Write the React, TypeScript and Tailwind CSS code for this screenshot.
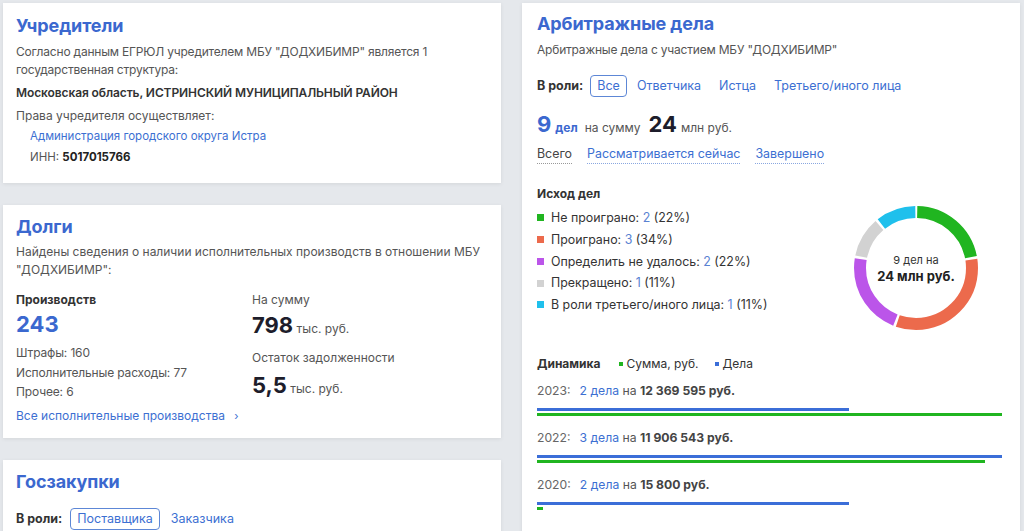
import React from 'react'

const blue = 'text-[#3c6fd2]'

function Card({ children, className = '' }: { children: React.ReactNode; className?: string }) {
  return (
    <div className={`bg-white shadow-[0_1px_4px_rgba(0,0,0,0.08)] ${className}`}>{children}</div>
  )
}

function Title({ children }: { children: React.ReactNode }) {
  return <div className="text-[18px] leading-[24px] font-bold text-[#3b68cf] tracking-[-0.1px]">{children}</div>
}

const outcomes = [
  { label: 'Не проиграно', n: 2, pct: 22, color: '#20b520' },
  { label: 'Проиграно', n: 3, pct: 34, color: '#ec6a4c' },
  { label: 'Определить не удалось', n: 2, pct: 22, color: '#bb55e9' },
  { label: 'Прекращено', n: 1, pct: 11, color: '#d2d2d2' },
  { label: 'В роли третьего/иного лица', n: 1, pct: 11, color: '#1fc0ec' },
]

const years = [
  { year: '2023', cases: '2 дела', sum: '12 369 595 руб.', casesW: 67.2, sumW: 100 },
  { year: '2022', cases: '3 дела', sum: '11 906 543 руб.', casesW: 100, sumW: 96.3 },
  { year: '2020', cases: '2 дела', sum: '15 800 руб.', casesW: 67.2, sumW: 1.3 },
]

function Donut() {
  const r = 56
  const c = 2 * Math.PI * r
  const gap = 2.5
  let offset = 0
  const total = 9
  const counts = [2, 3, 2, 1, 1]
  return (
    <div className="relative w-[124px] h-[124px]">
      <svg width="124" height="124" viewBox="0 0 124 124" className="-rotate-90">
        {outcomes.map((o, i) => {
          const len = (counts[i] / total) * c
          const el = (
            <circle
              key={o.label}
              cx="62"
              cy="62"
              r={r}
              fill="none"
              stroke={o.color}
              strokeWidth="12"
              strokeDasharray={`${len - gap} ${c - len + gap}`}
              strokeDashoffset={-(offset + gap / 2)}
            />
          )
          offset += len
          return el
        })}
      </svg>
      <div className="absolute inset-0 flex flex-col items-center justify-center pt-[1px]">
        <span className="text-[11px] leading-[14px] text-[#333]">9 дел на</span>
        <span className="text-[13px] leading-[18px] font-bold text-[#222]">24 млн руб.</span>
      </div>
    </div>
  )
}

export default function App() {
  return (
    <div
      className="w-[1024px] h-[531px] overflow-hidden bg-[#e5e8ec] flex items-start pl-[3px] pt-[3px] text-[12px] text-[#555]"
      style={{ fontFamily: 'Inter, "Noto Sans", sans-serif' }}
    >
      <div className="w-[498px] flex flex-col gap-[22px]">
        <Card className="h-[180px] pl-[13px] pr-[13px] pt-[11px]">
          <Title>Учредители</Title>
          <div className="mt-[5px] leading-[18px] tracking-[-0.2px]">
            Согласно данным ЕГРЮЛ учредителем МБУ "ДОДХИБИМР" является 1
            <br />
            государственная структура:
          </div>
          <div className="mt-[5px] leading-[18px] text-[#333] font-semibold tracking-[-0.1px]">
            Московская область, ИСТРИНСКИЙ МУНИЦИПАЛЬНЫЙ РАЙОН
          </div>
          <div className="mt-[5px] leading-[18px]">Права учредителя осуществляет:</div>
          <div className="pl-[14px] text-[11.5px]">
            <div className={`mt-[2px] leading-[18px] ${blue}`}>Администрация городского округа Истра</div>
            <div className="mt-[3px] leading-[18px]">
              ИНН: <span className="font-bold text-[#222]">5017015766</span>
            </div>
          </div>
        </Card>

        <Card className="h-[233px] pl-[13px] pr-[13px] pt-[10px]">
          <Title>Долги</Title>
          <div className="mt-[4px] leading-[18px]">
            Найдены сведения о наличии исполнительных производств в отношении МБУ
            <br />
            "ДОДХИБИМР":
          </div>
          <div className="mt-[12px] grid grid-cols-[236px_1fr]">
            <div>
              <div className="leading-[18px] font-bold text-[#333]">Производств</div>
              <div className="mt-[2px] text-[22px] leading-[26px] font-bold text-[#3b68cf]">243</div>
              <div className="mt-[6px] leading-[19.5px] tracking-[-0.15px]">Штрафы: 160</div>
              <div className="leading-[19.5px] tracking-[-0.15px]">Исполнительные расходы: 77</div>
              <div className="leading-[19.5px] tracking-[-0.15px]">Прочее: 6</div>
              <div className={`mt-[5px] leading-[18px] whitespace-nowrap ${blue}`}>
                Все исполнительные производства <span className="ml-[6px] text-[11px]">›</span>
              </div>
            </div>
            <div>
              <div className="leading-[18px]">На сумму</div>
              <div className="mt-[3px] leading-[26px]">
                <span className="text-[22px] font-bold text-[#1d1d2b]">798</span>{' '}
                <span className="text-[12px]">тыс. руб.</span>
              </div>
              <div className="mt-[7px] leading-[18px]">Остаток задолженности</div>
              <div className="mt-[5px] leading-[26px]">
                <span className="text-[22px] font-bold text-[#1d1d2b]">5,5</span>{' '}
                <span className="text-[12px]">тыс. руб.</span>
              </div>
            </div>
          </div>
        </Card>

        <Card className="h-[100px] pl-[13px] pr-[13px] pt-[10px]">
          <Title>Госзакупки</Title>
          <div className="mt-[14px] flex items-center">
            <span className="font-bold text-[#333] text-[12.5px]">В роли:</span>
            <span className={`ml-[8px] h-[22px] px-[6px] flex items-center border border-[#5d87d6] rounded-[4px] text-[12.5px] ${blue}`}>
              Поставщика
            </span>
            <span className={`ml-[11px] text-[12.5px] ${blue}`}>Заказчика</span>
          </div>
        </Card>
      </div>

      <Card className="ml-[21px] w-[498px] h-[600px] pl-[15px] pr-[18px] pt-[9px]">
        <Title>Арбитражные дела</Title>
        <div className="mt-[5px] leading-[18px] tracking-[-0.2px]">Арбитражные дела с участием МБУ "ДОДХИБИМР"</div>
        <div className="mt-[16px] flex items-center h-[22px] text-[12.5px]">
          <span className="font-bold text-[#333]">В роли:</span>
          <span className={`ml-[7px] h-[22px] px-[6px] flex items-center border border-[#5d87d6] rounded-[4px] ${blue}`}>
            Все
          </span>
          <span className={`ml-[10px] ${blue}`}>Ответчика</span>
          <span className={`ml-[18px] ${blue}`}>Истца</span>
          <span className={`ml-[18px] ${blue}`}>Третьего/иного лица</span>
        </div>
        <div className="mt-[14px] flex items-baseline leading-[26px]">
          <span className="text-[22px] font-bold text-[#3b68cf]">9</span>
          <span className="ml-[4px] font-bold text-[#3b68cf]">дел</span>
          <span className="ml-[7px]">на сумму</span>
          <span className="ml-[8px] text-[22px] font-bold text-[#1d1d2b]">24</span>
          <span className="ml-[4px]">млн руб.</span>
        </div>
        <div className="mt-[4px] flex leading-[18px] text-[12.4px]">
          <span className="text-[#444] border-b border-dotted border-[#999]">Всего</span>
          <span className={`ml-[15px] border-b border-dotted border-[#8aa7e0] ${blue}`}>Рассматривается сейчас</span>
          <span className={`ml-[15px] border-b border-dotted border-[#8aa7e0] ${blue}`}>Завершено</span>
        </div>

        <div className="mt-[21px] leading-[18px] font-bold text-[#333] text-[12px]">Исход дел</div>
        <div className="flex">
          <div className="flex-1 pt-[4px] text-[12.4px]">
            {outcomes.map((o) => (
              <div key={o.label} className="flex items-center leading-[21.75px] text-[#333]">
                <span className="w-[7px] h-[7px] mr-[7px]" style={{ backgroundColor: o.color }} />
                {o.label}:&nbsp;<span className="text-[#5a82d2]">{o.n}</span>&nbsp;({o.pct}%)
              </div>
            ))}
          </div>
          <div className="mr-[24px] mt-[3px]">
            <Donut />
          </div>
        </div>

        <div className="mt-[25px] flex items-center leading-[18px] text-[#333]">
          <span className="font-bold">Динамика</span>
          <span className="ml-[18px] w-[4px] h-[4px] bg-[#20b520]" />
          <span className="ml-[4px]">Сумма, руб.</span>
          <span className="ml-[16px] w-[4px] h-[4px] bg-[#3b6ed8]" />
          <span className="ml-[4px]">Дела</span>
        </div>

        <div className="mt-[9px] flex flex-col gap-[13px]">
          {years.map((y) => (
            <div key={y.year}>
              <div className="leading-[18px] text-[12.2px]">
                <span className="text-[#666]">{y.year}:</span>
                <span className={`ml-[9px] ${blue}`}>{y.cases}</span>
                <span className="text-[#555]"> на </span>
                <span className="font-bold text-[#444]">{y.sum}</span>
              </div>
              <div className="mt-[8px] h-[3px] bg-[#3b6ed8]" style={{ width: `${y.casesW}%` }} />
              <div className="mt-[2px] h-[3px] bg-[#20b520]" style={{ width: `${y.sumW}%` }} />
            </div>
          ))}
        </div>
      </Card>
    </div>
  )
}
